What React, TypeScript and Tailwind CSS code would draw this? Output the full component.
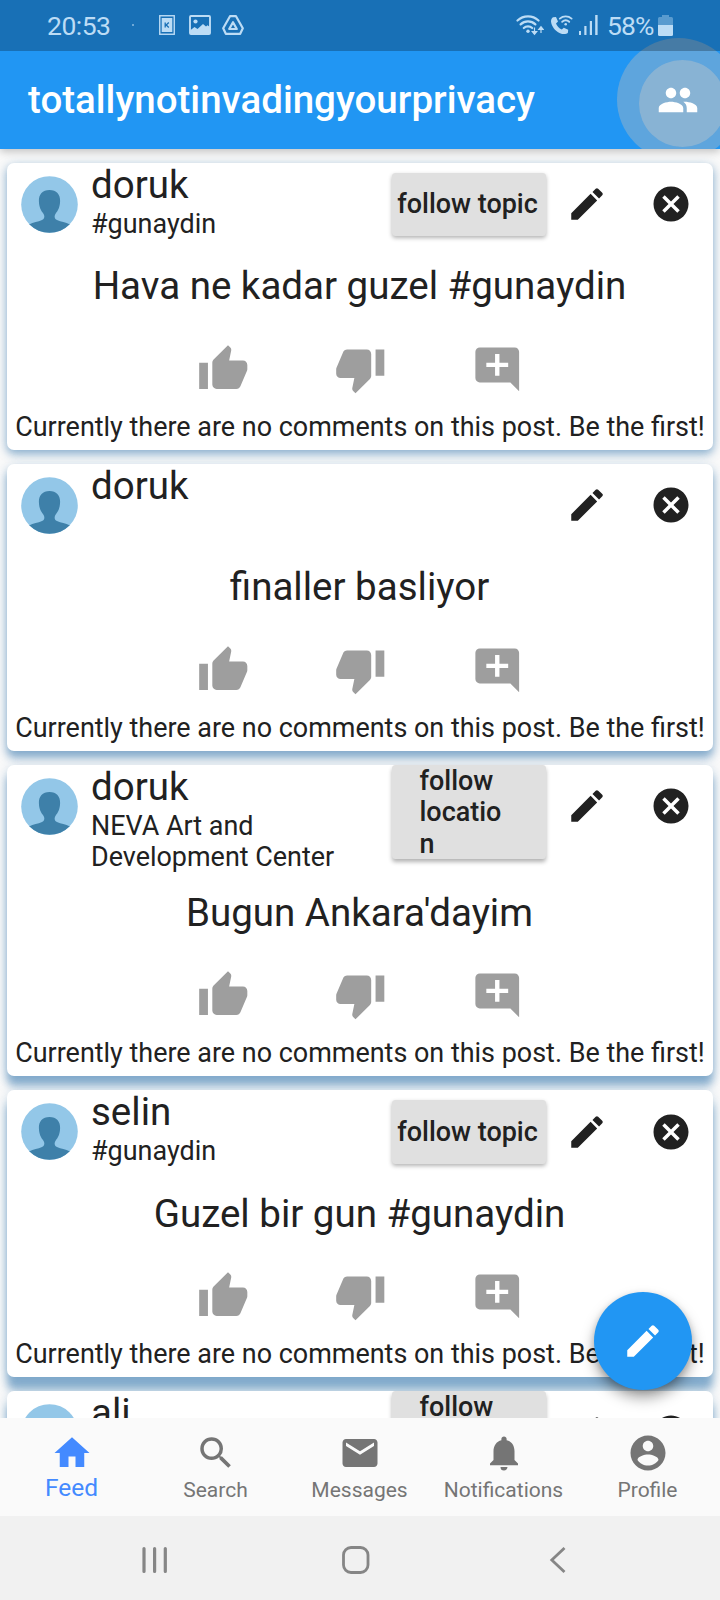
import type { ReactNode } from "react";
import {
  MdAddComment,
  MdCancel,
  MdEdit,
  MdEmail,
  MdHome,
  MdNotifications,
  MdPeople,
  MdSearch,
  MdThumbDown,
  MdThumbUp,
} from "react-icons/md";

type Post = {
  author: string;
  tag?: string;
  follow?: "topic" | "location";
  text: string;
  height: string;
  body: string;
  shadow: string;
};

const posts: Post[] = [
  {
    author: "doruk",
    tag: "#gunaydin",
    follow: "topic",
    text: "Hava ne kadar guzel #gunaydin",
    height: "h-[287px]",
    body: "mt-[9.5px]",
    shadow: "shadow-[0_4px_8px_rgba(70,130,180,0.5),0_2px_12px_rgba(70,130,180,0.25)]",
  },
  {
    author: "doruk",
    text: "finaller basliyor",
    height: "h-[287px]",
    body: "mt-[9.5px]",
    shadow: "shadow-[0_7px_8px_rgba(70,130,180,0.58),0_2px_12px_rgba(70,130,180,0.25)]",
  },
  {
    author: "doruk",
    tag: "NEVA Art and Development Center",
    follow: "location",
    text: "Bugun Ankara'dayim",
    height: "h-[311.5px]",
    body: "mt-[34px]",
    shadow: "shadow-[0_10px_8px_rgba(70,130,180,0.6),0_2px_12px_rgba(70,130,180,0.25)]",
  },
  {
    author: "selin",
    tag: "#gunaydin",
    follow: "topic",
    text: "Guzel bir gun #gunaydin",
    height: "h-[287px]",
    body: "mt-[9.5px]",
    shadow: "shadow-[0_13px_9px_rgba(70,130,180,0.62),0_2px_12px_rgba(70,130,180,0.25)]",
  },
  {
    author: "ali",
    follow: "location",
    text: "",
    height: "h-[287px]",
    body: "mt-[9.5px]",
    shadow: "shadow-[0_13px_9px_rgba(70,130,180,0.62),0_2px_12px_rgba(70,130,180,0.25)]",
  },
];

function StatusBar() {
  return (
    <div className="relative z-10 flex h-[50.75px] items-center bg-black/25 pl-[47px] text-[#bcdcf5]">
      <span className="w-[64px] pt-[2px] text-[26.5px] leading-[50px] tracking-[-0.5px]">20:53</span>
      <span className="ml-[21px] size-[2px] rounded-full bg-current opacity-70" />
      <svg className="ml-[25px]" width="16" height="20" viewBox="0 0 16 20">
        <rect x="0.75" y="0.75" width="14.5" height="18.5" fill="none" stroke="currentColor" strokeWidth="1.4" />
        <rect x="2.7" y="3" width="10.6" height="14" fill="currentColor" />
        <path d="M6.2 7.500v5M9.800 7.500 7.200 10l2.600 2.500" fill="none" stroke="#1a70b6" strokeWidth="1.3" />
      </svg>
      <svg className="ml-[14px]" width="22" height="20" viewBox="0 0 22 20">
        <rect x="1" y="1" width="20" height="18" rx="1" fill="none" stroke="currentColor" strokeWidth="1.9" />
        <circle cx="6.5" cy="6.5" r="2.1" fill="currentColor" />
        <path d="M1 15.5 5.5 12l3 2 5.5-5 3 2.5 1.5-1.2L21 12v7H1z" fill="currentColor" />
      </svg>
      <svg className="ml-[11px]" width="22" height="20" viewBox="0 0 22 20">
        <path d="M8 1.2h6l6.800 12-2.600 5.600H3.800L1.200 13.200z" fill="none" stroke="currentColor" strokeWidth="2.200" strokeLinejoin="round" />
        <path d="M11 7.200 14.800 14H7.200z" fill="none" stroke="currentColor" strokeWidth="2.200" strokeLinejoin="round" />
      </svg>
      <svg className="ml-[272px]" width="28" height="22" viewBox="0 0 28 22">
        <g fill="none" stroke="currentColor" strokeWidth="2.200" strokeLinecap="round">
          <path d="M1.500 6.500a15.500 15.500 0 0 1 21 0" />
          <path d="M4.600 10.400a10.800 10.800 0 0 1 14.800 0" />
          <path d="M7.800 14a6 6 0 0 1 8.400 0" />
        </g>
        <circle cx="12" cy="17.200" r="1.700" fill="currentColor" />
        <path
          d="M18.500 13.500v5M16.300 17.500l2.200 2.700 2.200-2.700zM25 19v-3M22.800 15.500l2.200-2.700 2.200 2.700z"
          fill="currentColor"
          stroke="currentColor"
          strokeWidth="1.200"
        />
      </svg>
      <svg className="ml-[6px]" width="23" height="22" viewBox="0 0 23 22">
        <path
          d="M3 3.200 6 3l2 4.500-2 2c1 2.600 3 4.700 5.800 6l2-1.800 4.400 2-.3 3C16 20.500 13 20.500 10 19.200 4.800 17 1.500 12 1 7.500 1 5.500 1.700 4 3 3.200z"
          fill="currentColor"
        />
        <g fill="none" stroke="currentColor" strokeWidth="1.900" strokeLinecap="round">
          <path d="M9.800 4.600a9 9 0 0 1 11.800 0" />
          <path d="M12.200 7.800a5.500 5.500 0 0 1 7 0" />
        </g>
        <circle cx="15.700" cy="10.300" r="1.300" fill="currentColor" />
      </svg>
      <svg className="ml-[6px]" width="19" height="20" viewBox="0 0 19 20" fill="currentColor">
        <rect x="0" y="16" width="2" height="4" />
        <rect x="5.300" y="11" width="2.200" height="9" />
        <rect x="10.800" y="6" width="2.200" height="14" />
        <rect x="16.200" y="0" width="2.400" height="20" />
      </svg>
      <span className="ml-[9px] w-[51px] pt-[2px] text-[26.500px] leading-[50px] tracking-[-0.9px] whitespace-nowrap">58%</span>
      <svg width="15" height="21" viewBox="0 0 15 21">
        <path d="M4 0h7v2h2.500q1.500 0 1.500 1.500V10H0V3.500Q0 2 1.500 2H4z" fill="currentColor" opacity=".4" />
        <path d="M0 10h15v9.500q0 1.500-1.500 1.500h-12Q0 21 0 19.500z" fill="currentColor" />
      </svg>
    </div>
  );
}

function Header() {
  return (
    <header className="relative z-10 h-[148.75px] shrink-0 bg-[#2196f3] shadow-[0_3px_8px_rgba(0,0,0,0.22)]">
      <div className="absolute inset-0 overflow-hidden">
        <div className="absolute top-[38px] left-[616.5px] size-[123px] rounded-full bg-[#bcbcbc]/40" />
        <div className="absolute top-[60px] left-[639px] size-[87px] rounded-full bg-[#c8c8c8]/40" />
      </div>
      <StatusBar />
      <div className="relative flex h-[98px] items-center justify-between pr-[21px] pl-[28px] text-white">
        <h1 className="text-[38.5px] leading-none font-medium">totallynotinvadingyourprivacy</h1>
        <MdPeople size={42} />
      </div>
    </header>
  );
}

function Avatar() {
  return (
    <svg className="mt-[13px] size-[57px] shrink-0" viewBox="0 0 57 57">
      <defs>
        <clipPath id="avatar-circle">
          <circle cx="28.5" cy="28.5" r="28.3" />
        </clipPath>
      </defs>
      <g clipPath="url(#avatar-circle)">
        <rect width="57" height="57" fill="#93c7e8" />
        <path
          d="M28.5 14c-7 0-10.800 4.500-10.600 11 .1 6 2 9.500 4.400 12.500 1.700 2.600 1.400 5.300-1.300 6.600-4 1.900-8.500 2-13 4.400V57h41v-8.500c-4.500-2.400-9-2.500-13-4.400-2.700-1.300-3-4-1.300-6.600 2.400-3 4.300-6.500 4.400-12.500.2-6.500-3.600-11-10.600-11z"
          fill="#3e80a9"
        />
      </g>
    </svg>
  );
}

function FollowButton({ kind }: { kind?: "topic" | "location" }) {
  if (kind === "topic") {
    return (
      <button className="mt-[10px] h-[63.5px] w-[154px] shrink-0 rounded-[3.5px] bg-[#e0e0e0] pr-[2px] text-[26.95px] font-medium whitespace-nowrap shadow-[0_2px_4px_rgba(0,0,0,0.3)]">
        follow topic
      </button>
    );
  }
  if (kind === "location") {
    return (
      <button className="h-[94.5px] w-[154px] shrink-0 rounded-[3.5px] bg-[#e0e0e0] pt-[1px] pl-[28px] text-left text-[26.95px] leading-[31.5px] font-medium shadow-[0_3px_4px_rgba(0,0,0,0.3)]">
        follow
        <br />
        locatio
        <br />n
      </button>
    );
  }
  return <div className="w-[154px] shrink-0" />;
}

function PostCard({ post }: { post: Post }) {
  return (
    <article className={`relative shrink-0 rounded-[7px] bg-white px-[7px] ${post.height} ${post.shadow}`}>
      <div className="flex h-[84px] items-start pl-[6.5px]">
        <Avatar />
        <div className="ml-[13.5px] w-[300.5px] shrink-0">
          <div className="-mt-px text-[38.5px] leading-[45px]">{post.author}</div>
          {post.tag && <div className="mt-[2px] w-[270px] text-[26.95px] leading-[31.5px]">{post.tag}</div>}
        </div>
        <FollowButton kind={post.follow} />
        <MdEdit size={42} className="mt-[20.5px] ml-[20.5px] shrink-0" />
        <MdCancel size={42} className="mt-[20.5px] ml-[42px] shrink-0" />
      </div>
      <p className={`pr-[1px] text-center text-[38.5px] leading-[60px] whitespace-nowrap ${post.body}`}>{post.text}</p>
      <div className="mt-[26.5px] flex h-[53px] justify-center gap-[84.5px] text-[#9e9e9e]">
        <MdThumbUp size={52.5} />
        <MdThumbDown size={52.5} />
        <MdAddComment size={52.5} />
      </div>
      <p className="mt-[15px] text-center text-[26.95px] leading-[32px] whitespace-nowrap">
        Currently there are no comments on this post. Be the first!
      </p>
    </article>
  );
}

function AccountIcon() {
  return (
    <svg width="42" height="42" viewBox="0 0 24 24" fill="currentColor">
      <path d="M12 2C6.480 2 2 6.480 2 12s4.480 10 10 10 10-4.480 10-10S17.520 2 12 2zm0 3c1.660 0 3 1.340 3 3s-1.340 3-3 3-3-1.340-3-3 1.340-3 3-3zm0 14.200c-2.500 0-4.710-1.280-6-3.220.03-1.990 4-3.080 6-3.080 1.990 0 5.970 1.090 6 3.080-1.290 1.940-3.500 3.220-6 3.220z" />
    </svg>
  );
}

function NavItem({ icon, label, active }: { icon: ReactNode; label: string; active?: boolean }) {
  return (
    <div className={`flex w-[144px] flex-col items-center ${active ? "text-[#448aff]" : "text-[#757575]"}`}>
      <div className="mt-[14px] h-[42px]">{icon}</div>
      <span className={active ? "pr-[1px] text-[24.5px] leading-[28px]" : "mt-[4px] pr-[1px] text-[21px] leading-[25px]"}>
        {label}
      </span>
    </div>
  );
}

export default function App() {
  return (
    <div className="relative flex h-[1600px] w-[720px] flex-col overflow-hidden bg-[#fafafa] font-['Roboto',sans-serif] text-[#212121]">
      <Header />
      <main className="flex min-h-0 flex-1 flex-col gap-[14px] overflow-hidden px-[7px] pt-[13.75px]">
        {posts.map((post, i) => (
          <PostCard key={i} post={post} />
        ))}
      </main>
      <nav className="flex h-[98px] shrink-0 bg-[#fafafa]">
        <NavItem icon={<MdHome size={42} />} label="Feed" active />
        <NavItem icon={<MdSearch size={42} />} label="Search" />
        <NavItem icon={<MdEmail size={42} />} label="Messages" />
        <NavItem icon={<MdNotifications size={42} />} label="Notifications" />
        <NavItem icon={<AccountIcon />} label="Profile" />
      </nav>
      <footer className="flex h-[84px] shrink-0 items-center bg-[#f1f1f1] pt-[4px] pl-[141px] text-[#868686]">
        <svg width="27" height="28" viewBox="0 0 27 28" stroke="currentColor" strokeWidth="3.2" strokeLinecap="round">
          <path d="M3 2.500v23M13.600 2.500v23M24.300 2.500v23" />
        </svg>
        <svg className="ml-[173px]" width="30" height="30" viewBox="0 0 30 30">
          <rect x="2.5" y="2.5" width="24.5" height="25" rx="7.5" fill="none" stroke="currentColor" strokeWidth="2.8" />
        </svg>
        <svg className="ml-[178px]" width="18" height="28" viewBox="0 0 18 28">
          <path d="M15.500 2 2.800 14l12.700 12" fill="none" stroke="currentColor" strokeWidth="2.800" />
        </svg>
      </footer>
      <button className="absolute top-[1292px] left-[594px] flex size-[98px] items-center justify-center rounded-full bg-[#2196f3] text-white shadow-[0_8px_14px_rgba(0,0,0,0.35),0_2px_6px_rgba(0,0,0,0.15)]">
        <MdEdit size={42} />
      </button>
    </div>
  );
}
